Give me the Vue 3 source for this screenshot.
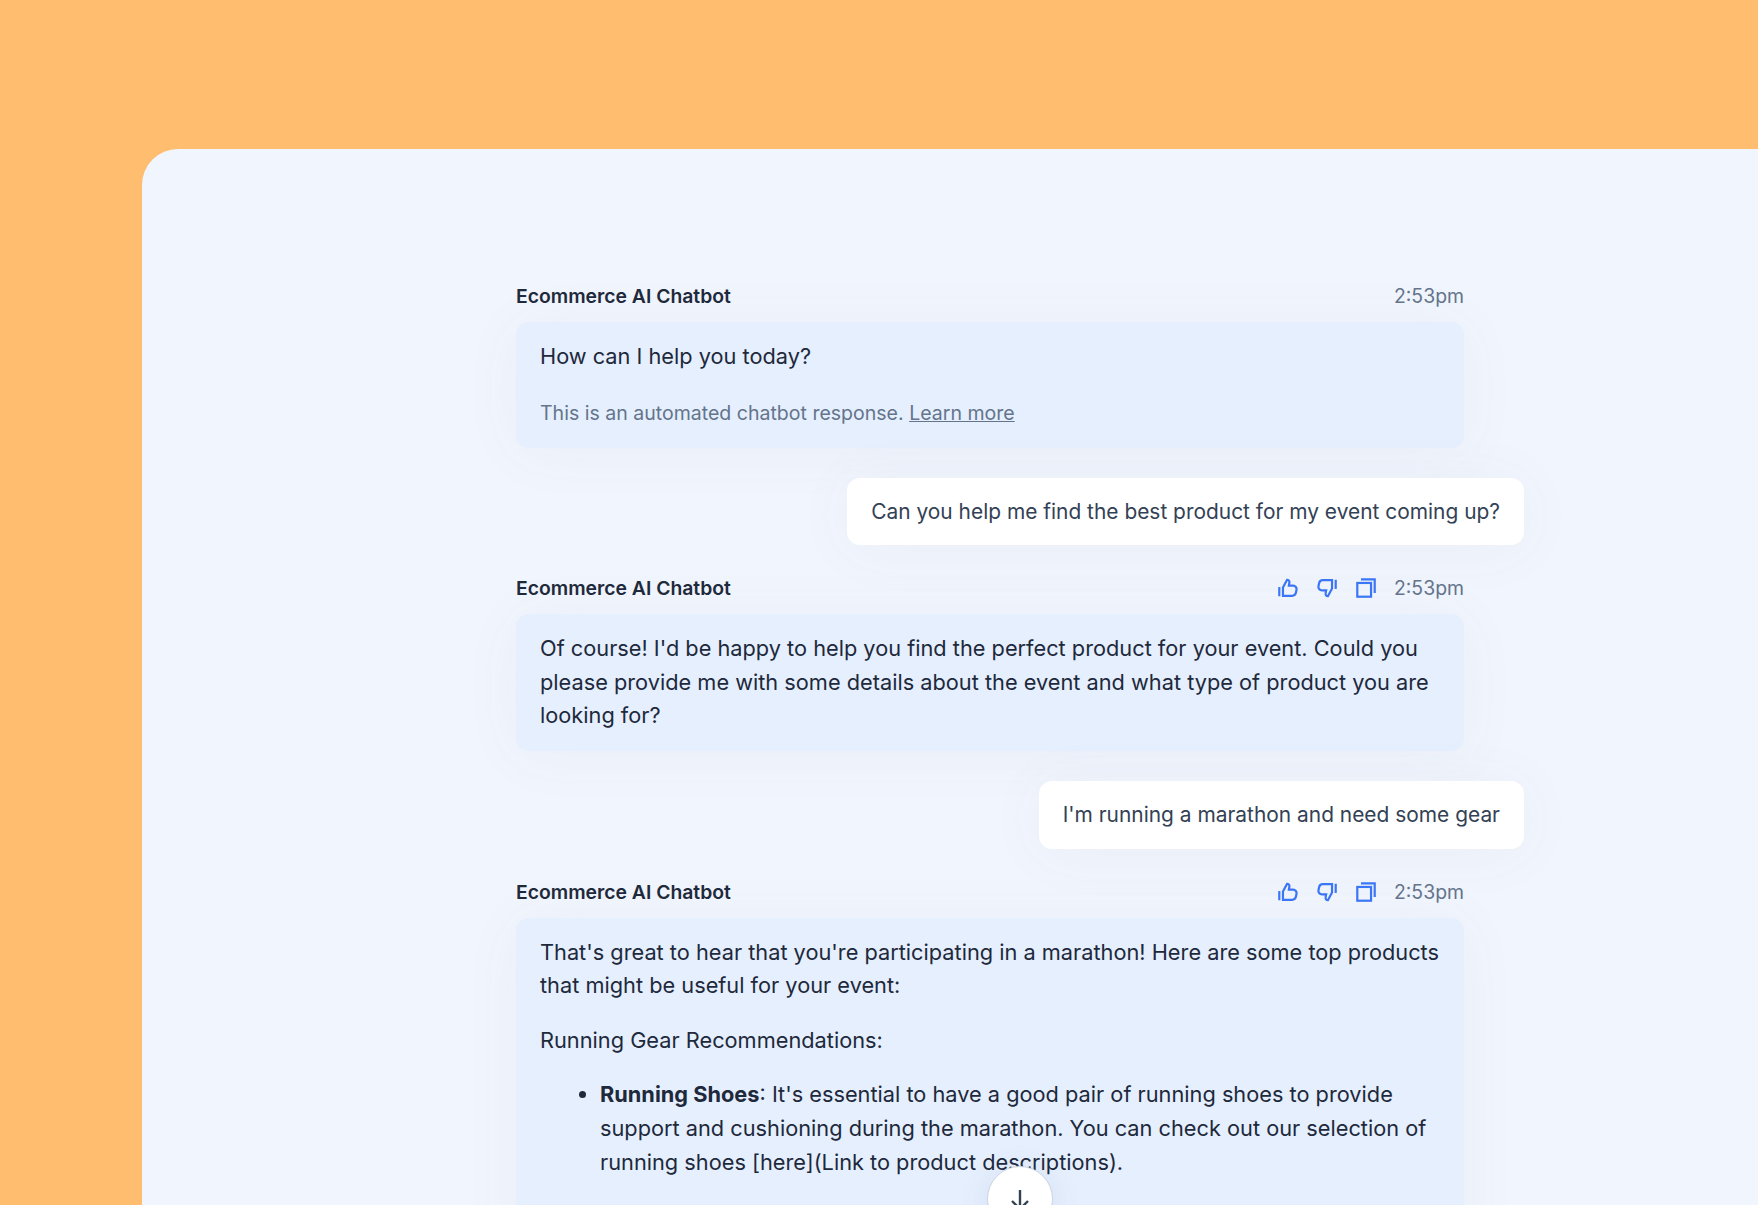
<template>
  <div class="page">
    <main class="panel">
      <div class="chat">
        <template v-for="(msg, i) in messages" :key="i">
          <div v-if="msg.user" class="user-row">
            <div class="user-bubble">{{ msg.text }}</div>
          </div>
          <section v-else class="bot-msg">
            <header class="bot-head">
              <span class="bot-name">Ecommerce AI Chatbot</span>
              <span class="bot-meta">
                <template v-if="msg.actions">
                  <svg class="icon" viewBox="0 0 24 24">
                    <path d="M2.5 11v10" />
                    <path d="M6.5 20.5V11.5L11 3c1.8 0 2.9 1.4 2.5 3.2L12.9 9.5h4.6c2.6 0 4.3 2.1 3.8 4.5l-.6 3c-.4 2.1-2 3.5-4.2 3.5Z" />
                  </svg>
                  <svg class="icon" viewBox="0 0 24 24">
                    <path d="M21.5 13V3" />
                    <path d="M17.5 3.5v9L13 21c-1.8 0-2.9-1.4-2.5-3.2l.6-3.3H6.5c-2.6 0-4.3-2.1-3.8-4.5l.6-3c.4-2.1 2-3.5 4.2-3.5Z" />
                  </svg>
                  <svg class="icon" viewBox="0 0 24 24">
                    <rect x="2.5" y="6.5" width="15" height="15" />
                    <path d="M6.5 2.5h15v15" />
                  </svg>
                </template>
                <span class="time">2:53pm</span>
              </span>
            </header>
            <div class="bot-bubble" :class="{ tall: msg.list }">
              <p v-for="(line, j) in msg.lines" :key="j">{{ line }}</p>
              <p v-if="msg.note" class="note">
                This is an automated chatbot response. <a href="#">Learn more</a>
              </p>
              <ul v-if="msg.list">
                <li>
                  <strong>Running Shoes</strong>: It's essential to have a good pair of running shoes to provide support and cushioning during the marathon. You can check out our selection of running shoes [here](Link to product descriptions).
                </li>
              </ul>
            </div>
          </section>
        </template>
      </div>
      <button class="scroll-btn" type="button" aria-label="Scroll down">
        <svg viewBox="0 0 24 24">
          <path d="M12 3v19" />
          <path d="M4 14l8 8 8-8" />
        </svg>
      </button>
    </main>
  </div>
</template>

<script setup>
const messages = [
  { lines: ['How can I help you today?'], note: true },
  { user: true, text: 'Can you help me find the best product for my event coming up?' },
  {
    actions: true,
    lines: [
      "Of course! I'd be happy to help you find the perfect product for your event. Could you please provide me with some details about the event and what type of product you are looking for?"
    ]
  },
  { user: true, text: "I'm running a marathon and need some gear" },
  {
    actions: true,
    list: true,
    lines: [
      "That's great to hear that you're participating in a marathon! Here are some top products that might be useful for your event:",
      'Running Gear Recommendations:'
    ]
  }
]
</script>

<style>
html,
body {
  margin: 0;
  height: 100%;
  overflow: hidden;
  background: #ffbe6f;
}
</style>

<style scoped>
.page {
  height: 1205px;
  overflow: hidden;
  padding: 149px 0 0 142px;
  box-sizing: border-box;
  background: #ffbe6f;
  font-family: Inter, "Liberation Sans", sans-serif;
  font-optical-sizing: none;
  font-variation-settings: "opsz" 14;
  color: #1e293b;
}
.panel {
  position: relative;
  height: 1056px;
  overflow: hidden;
  background: #f1f5fd;
  border-top-left-radius: 36px;
}
.chat {
  width: 948px;
  margin-left: 374px;
  padding-top: 133px;
}
.bot-msg {
  margin-bottom: 30px;
}
.bot-head {
  display: flex;
  justify-content: space-between;
  align-items: center;
  height: 28px;
  margin-bottom: 12px;
}
.bot-name {
  font-size: 19.35px;
  font-weight: 600;
  color: #1e293b;
}
.bot-meta {
  display: flex;
  align-items: center;
  gap: 17px;
}
.time {
  font-size: 19.4px;
  color: #64748b;
}
.icon {
  width: 22px;
  height: 22px;
  fill: none;
  stroke: #3b76f6;
  stroke-width: 2.4;
}
.bot-bubble {
  padding: 18px 24px;
  border-radius: 13px;
  background: #e5effe;
  box-shadow: 0 4px 60px rgba(100, 116, 139, 0.05);
  font-size: 21.76px;
  line-height: 33.6px;
}
.bot-bubble.tall {
  min-height: 500px;
}
.bot-bubble p {
  margin: 0 0 21px;
}
.bot-bubble p:last-child {
  margin-bottom: 0;
}
.bot-bubble .note {
  margin-top: 23px;
  font-size: 19.55px;
  line-height: 33px;
  color: #64748b;
}
.note a {
  color: #64748b;
}
ul {
  margin: 21px 0 0;
  padding-left: 60px;
}
.user-row {
  display: flex;
  justify-content: flex-end;
  margin: 0 -60px 29px 0;
}
.user-bubble {
  padding: 17px 24px;
  border-radius: 13px;
  background: #fff;
  box-shadow: 0 4px 60px rgba(100, 116, 139, 0.05);
  font-size: 20.92px;
  line-height: 33.6px;
  color: #334155;
}
.scroll-btn {
  position: absolute;
  left: 845px;
  top: 1017px;
  width: 66px;
  height: 66px;
  padding: 0;
  display: flex;
  align-items: center;
  justify-content: center;
  border: 1px solid #cbd5e1;
  border-radius: 50%;
  background: #fff;
  box-shadow: 0 4px 30px rgba(100, 116, 139, 0.12);
}
.scroll-btn svg {
  width: 24px;
  height: 24px;
  fill: none;
  stroke: #334155;
  stroke-width: 2.4;
}
</style>
